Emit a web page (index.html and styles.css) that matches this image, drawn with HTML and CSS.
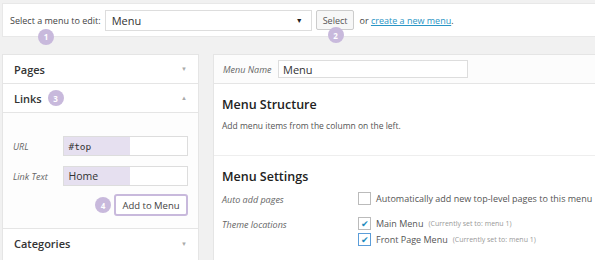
FILE: index.html
```html
<!DOCTYPE html>
<html lang="en">
<head>
    <meta charset="UTF-8">
    <title>Edit Menus</title>
    <link rel="stylesheet" href="styles.css">
</head>
<body>
    <div class="manage-menus">
        <label class="select-label">Select a menu to edit:
            <span class="step step-1">1</span>
        </label>
        <div class="fake-select">
            <span>Menu</span>
            <span class="caret">&#9660;</span>
        </div>
        <div class="select-wrap">
            <button class="btn">Select</button>
            <span class="step step-2">2</span>
        </div>
        <span class="or-text">or <a href="#">create a new menu</a>.</span>
    </div>

    <div class="columns">
        <div class="side">
            <div class="box-head">
                <span>Pages</span>
                <span class="arrow">&#9660;</span>
            </div>
            <div class="box-head">
                <span>Links <span class="step step-inline">3</span></span>
                <span class="arrow">&#9650;</span>
            </div>
            <div class="links-body">
                <div class="field">
                    <span class="field-label">URL</span>
                    <div class="field-input mono"><span class="fill">#top</span></div>
                </div>
                <div class="field">
                    <span class="field-label">Link Text</span>
                    <div class="field-input"><span class="fill">Home</span></div>
                </div>
                <div class="add-row">
                    <span class="step step-inline">4</span>
                    <button class="btn btn-add">Add to Menu</button>
                </div>
            </div>
            <div class="box-head last">
                <span>Categories</span>
                <span class="arrow">&#9660;</span>
            </div>
        </div>

        <div class="main">
            <div class="name-row">
                <span class="field-label">Menu Name</span>
                <div class="name-input">Menu</div>
            </div>
            <div class="section">
                <h3>Menu Structure</h3>
                <p class="hint">Add menu items from the column on the left.</p>
            </div>
            <div class="section settings">
                <h3>Menu Settings</h3>
                <div class="setting">
                    <span class="field-label">Auto add pages</span>
                    <div class="options">
                        <label class="check"><span class="box"></span>Automatically add new top-level pages to this menu</label>
                    </div>
                </div>
                <div class="setting">
                    <span class="field-label">Theme locations</span>
                    <div class="options">
                        <label class="check"><span class="box on">&#10004;</span>Main Menu <small>(Currently set to: menu 1)</small></label>
                        <label class="check"><span class="box on focus">&#10004;</span>Front Page Menu <small>(Currently set to: menu 1)</small></label>
                    </div>
                </div>
            </div>
        </div>
    </div>
</body>
</html>
```

FILE: styles.css
```css
* {
    margin: 0;
    padding: 0;
    box-sizing: border-box;
}

body {
    font-family: 'Open Sans', 'Noto Sans', sans-serif;
    font-size: 10px;
    color: #444;
    background: #f1f1f1;
    padding: 3px 0 0 2px;
    width: 595px;
    height: 260px;
    overflow: hidden;
}

.manage-menus {
    display: flex;
    align-items: center;
    height: 34px;
    background: #fff;
    border: 1px solid #e8e8e8;
    border-right: none;
    padding: 0 7px;
}

.select-label {
    position: relative;
    font-size: 9px;
    margin-right: 4px;
}

.step {
    display: inline-flex;
    align-items: center;
    justify-content: center;
    width: 16px;
    height: 16px;
    border-radius: 50%;
    background: #c8b9dc;
    color: #fff;
    font-size: 8px;
    font-weight: 700;
}

.step-1 {
    position: absolute;
    left: 28px;
    top: 15px;
}

.fake-select {
    display: flex;
    justify-content: space-between;
    align-items: center;
    width: 207px;
    height: 21px;
    border: 1px solid #ddd;
    padding: 0 8px 0 6px;
    font-size: 11px;
    color: #333;
}

.caret {
    font-size: 7px;
    color: #222;
}

.select-wrap {
    position: relative;
    margin-left: 4px;
}

.btn {
    font-family: inherit;
    font-size: 9px;
    color: #555;
    background: #f7f7f7;
    border: 1px solid #ccc;
    border-radius: 2px;
    height: 20px;
    padding: 0 6px;
}

.step-2 {
    position: absolute;
    left: 12px;
    top: 17px;
}

.or-text {
    margin-left: 5px;
    font-size: 9px;
}

.or-text a {
    color: #2a95c5;
}

.columns {
    display: flex;
    gap: 14px;
    margin-top: 17px;
}

.side {
    width: 197px;
    background: #fff;
    border: 1px solid #e5e5e5;
}

.box-head {
    display: flex;
    justify-content: space-between;
    align-items: center;
    height: 29px;
    padding: 0 11px;
    font-size: 11px;
    font-weight: 600;
    color: #333;
    border-bottom: 1px solid #e5e5e5;
}

.box-head.last {
    border-bottom: none;
}

.box-head .step-inline {
    margin-left: 3px;
    vertical-align: 1px;
}

.arrow {
    font-size: 6px;
    color: #aaa;
}

.links-body {
    padding: 23px 10px 12px 10px;
    border-bottom: 1px solid #e5e5e5;
    background: #fdfdfd;
}

.field {
    display: flex;
    align-items: center;
    margin-bottom: 10px;
}

.field-label {
    width: 51px;
    font-size: 9px;
    font-style: italic;
    color: #666;
}

.field-input {
    width: 126px;
    height: 20px;
    border: 1px solid #ddd;
    background: #fff;
    font-size: 10.5px;
    color: #333;
}

.fill {
    display: flex;
    align-items: center;
    width: 66px;
    height: 100%;
    background: #e6e0f0;
    padding-left: 4px;
}

.mono {
    font-family: 'DejaVu Sans Mono', monospace;
    font-size: 9.5px;
}

.add-row {
    display: flex;
    justify-content: flex-end;
    align-items: center;
    gap: 3px;
    margin-top: -2px;
}

.btn-add {
    height: 22px;
    width: 74px;
    background: #fff;
    border: 2px solid #c8b9dc;
    border-radius: 3px;
    padding: 0;
    font-size: 9.5px;
    color: #444;
}

.main {
    flex: 1;
    background: #fff;
    border: 1px solid #e5e5e5;
    border-right: none;
}

.name-row {
    display: flex;
    align-items: center;
    height: 29px;
    padding: 0 9px;
    border-bottom: 1px solid #e5e5e5;
    background: #fcfcfc;
}

.name-row .field-label {
    width: 55px;
}

.name-input {
    display: flex;
    align-items: center;
    width: 190px;
    height: 18px;
    border: 1px solid #ddd;
    background: #fff;
    padding-left: 4px;
    font-size: 11px;
    color: #333;
}

.section {
    padding: 12px 8px 0 8px;
    height: 72px;
    border-bottom: 1px solid #eee;
}

.section h3 {
    font-size: 12.5px;
    font-weight: 600;
    color: #222;
    margin-bottom: 7px;
}

.hint {
    font-size: 8.5px;
    color: #555;
}

.settings {
    height: auto;
    padding-top: 12px;
    border-bottom: none;
    padding-bottom: 6px;
}

.settings h3 {
    margin-bottom: 7px;
}

.setting {
    display: flex;
    margin-bottom: 11px;
}

.setting .field-label {
    width: 136px;
    padding-top: 1px;
}

.options {
    display: flex;
    flex-direction: column;
    gap: 3px;
}

.check {
    display: flex;
    align-items: center;
    gap: 5px;
    font-size: 9px;
    color: #555;
    white-space: nowrap;
}

.check small {
    font-size: 7px;
    color: #999;
}

.box {
    display: inline-flex;
    align-items: center;
    justify-content: center;
    width: 13px;
    height: 13px;
    border: 1px solid #bbb;
    background: #fff;
    font-size: 9px;
    color: #1e8cbe;
}

.box.focus {
    border-color: #5b9dd9;
}
```
